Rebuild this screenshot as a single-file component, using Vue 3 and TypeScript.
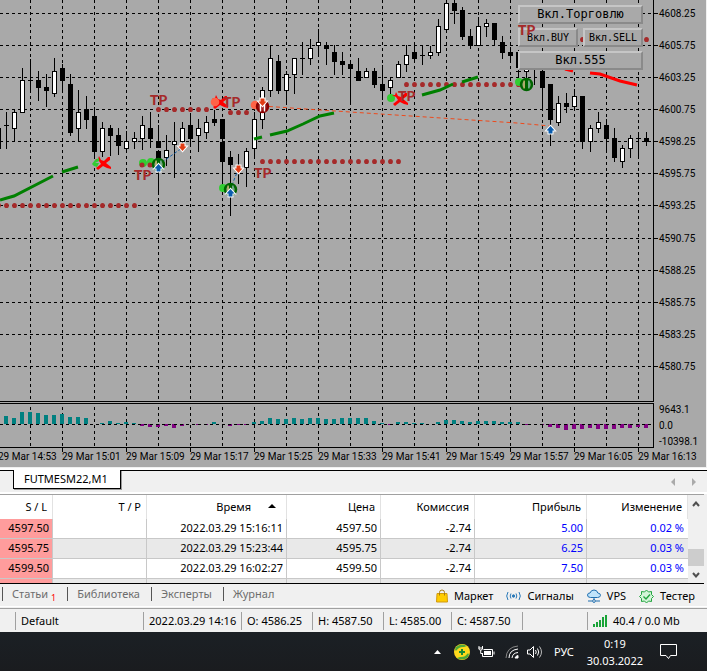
<script setup lang="ts">
type Candle = [x: number, high: number, low: number, top: number, bottom: number, kind: 'b' | 'w' | 'd']
type Point = [x: number, y: number]

const candles: Candle[] = [
  [-2, 128, 149, 128, 149, 'b'], [6, 112, 149, 125, 126, 'd'], [14, 110, 141, 112, 129, 'w'],
  [22, 68, 113, 80, 113, 'w'], [30, 59, 92, 80, 81, 'd'], [38, 71, 101, 80, 88, 'b'],
  [46, 74, 107, 87, 91, 'b'], [54, 58, 97, 71, 94, 'w'], [62, 64, 92, 68, 81, 'b'],
  [70, 74, 136, 84, 133, 'b'], [78, 90, 142, 112, 129, 'w'], [86, 96, 129, 109, 120, 'b'],
  [94, 107, 157, 116, 152, 'b'], [102, 122, 157, 128, 152, 'w'], [110, 125, 156, 128, 136, 'b'],
  [118, 128, 155, 135, 146, 'b'], [126, 131, 152, 141, 149, 'w'], [134, 132, 149, 138, 142, 'w'],
  [142, 116, 150, 125, 139, 'w'], [150, 112, 148, 128, 139, 'b'], [158, 125, 148, 141, 148, 'b'],
  [158, 151, 193, 151, 163, 'b'], [166, 135, 166, 150, 158, 'w'], [174, 122, 178, 141, 145, 'w'],
  [182, 122, 152, 128, 142, 'w'], [190, 113, 144, 125, 139, 'b'], [198, 119, 152, 128, 136, 'w'],
  [206, 116, 139, 122, 133, 'w'], [214, 110, 126, 119, 123, 'b'], [222, 119, 139, 119, 139, 'b'],
  [222, 142, 187, 142, 162, 'b'], [230, 151, 216, 157, 165, 'b'], [238, 154, 184, 165, 171, 'w'],
  [246, 148, 187, 151, 168, 'w'], [254, 112, 158, 119, 149, 'w'], [262, 87, 129, 90, 120, 'w'],
  [270, 45, 97, 58, 91, 'w'], [278, 55, 94, 61, 91, 'b'], [286, 71, 104, 74, 91, 'w'],
  [294, 58, 94, 58, 75, 'w'], [302, 42, 75, 58, 59, 'd'], [310, 39, 65, 48, 59, 'w'],
  [318, 29, 56, 42, 46, 'w'], [326, 42, 65, 45, 49, 'b'], [334, 45, 75, 52, 62, 'b'],
  [342, 52, 75, 61, 65, 'b'], [350, 60, 104, 64, 69, 'b'], [358, 58, 81, 71, 81, 'b'],
  [366, 68, 78, 71, 78, 'w'], [374, 68, 88, 71, 85, 'b'], [382, 65, 100, 84, 91, 'b'],
  [390, 77, 94, 80, 88, 'w'], [398, 61, 78, 64, 78, 'w'], [406, 45, 72, 55, 65, 'w'],
  [414, 46, 62, 52, 59, 'b'], [422, 45, 65, 55, 56, 'd'], [430, 46, 59, 52, 56, 'w'],
  [438, 19, 56, 26, 53, 'w'], [446, 0, 32, 3, 30, 'w'], [454, 0, 24, 3, 11, 'b'],
  [462, 7, 40, 10, 37, 'b'], [470, 29, 49, 36, 46, 'b'], [478, 17, 46, 26, 46, 'w'],
  [486, 19, 37, 23, 27, 'w'], [494, 23, 46, 23, 40, 'b'], [502, 36, 59, 42, 53, 'b'],
  [510, 47, 60, 52, 56, 'b'], [518, 50, 78, 52, 68, 'b'], [518, 68, 78, 71, 72, 'd'],
  [526, 60, 78, 66, 72, 'w'], [534, 60, 85, 60, 68, 'b'], [542, 66, 108, 71, 88, 'b'],
  [550, 84, 146, 84, 120, 'b'], [558, 96, 126, 103, 123, 'w'], [566, 93, 113, 103, 107, 'b'],
  [574, 89, 110, 96, 107, 'w'], [582, 96, 149, 96, 142, 'b'], [590, 125, 152, 128, 142, 'w'],
  [598, 112, 133, 122, 129, 'w'], [606, 119, 152, 125, 139, 'b'], [614, 128, 162, 138, 158, 'b'],
  [622, 145, 168, 148, 162, 'w'], [630, 135, 158, 138, 149, 'w'], [638, 135, 157, 138, 139, 'd'],
  [646, 132, 146, 138, 142, 'b'],
]

// Histogram values, one per bar from x = 6, in steps of 8
const volume: number[] = [
  8, 6, 12, 12, 11, 9, 9, 10, 7, 7, 6, 0, 1, 3, 1, 2, 1, -2, -3, -3, -2, -4, -2, 0, -1, -1, 2, 0, -2, -1, -1,
  2, 3, 6, 5, 5, 6, 5, 6, 6, 5, 5, 6, 6, 6, 6, 3, 1, -1, 2, 2, 1, 1, 0, 2, 4, 4, 3, 2, 3, 3, 3, 2, 2, 2, -1, 0, -1,
  -3, -4, -6, -5, -5, -4, -5, -5, -5, -4, -4, -3, -4,
]

const gridX = Array.from({ length: 20 }, (_, i) => 30 + i * 32)
const gridY = Array.from({ length: 12 }, (_, i) => 13 + Math.round(i * 32.08))

function row(from: number, to: number, y: number): Point[] {
  const out: Point[] = []
  for (let x = from; x <= to; x += 8) out.push([x, y])
  return out
}
const dots: Point[] = [
  ...row(-2, 134, 205), ...row(158, 206, 109), ...row(230, 246, 112),
  ...row(262, 398, 161), ...row(406, 518, 84), ...row(582, 646, 39), [142, 164], [150, 164],
]
const targets: Point[] = [[150, 105], [134, 180], [223, 107], [254, 178], [398, 101]]
const blobsGreen: Point[] = [[143, 163], [151, 162], [223, 188], [391, 98], [519, 82]]
const blobsRed: Point[] = [[215, 102], [255, 105]]
const rings: Point[] = [[158, 164], [230, 189], [526, 84]]
const crosses: Point[] = [[103, 163], [220, 102], [400, 99]]
const buys: Point[] = [[158, 168], [230, 193], [550, 130]]
const sells: Point[] = [[182, 147], [238, 169], [262, 102]]

const prices = ['4608.25', '4605.75', '4603.25', '4600.75', '4598.25', '4595.75', '4593.25', '4590.75', '4588.25', '4585.75', '4583.25', '4580.75']
const times = ['14:53', '15:01', '15:09', '15:17', '15:25', '15:33', '15:41', '15:49', '15:57', '16:05', '16:13']

interface Deal { sl: string; time: string; price: string; fee: string; profit: string; change: string }
const deals: Deal[] = [
  { sl: '4597.50', time: '2022.03.29 15:16:11', price: '4597.50', fee: '-2.74', profit: '5.00', change: '0.02 %' },
  { sl: '4595.75', time: '2022.03.29 15:23:44', price: '4595.75', fee: '-2.74', profit: '6.25', change: '0.03 %' },
  { sl: '4599.50', time: '2022.03.29 16:02:27', price: '4599.50', fee: '-2.74', profit: '7.50', change: '0.03 %' },
]
</script>

<template>
  <div class="terminal">
    <main class="chart">
      <div class="plot-column">
        <svg class="plot" viewBox="0 0 654 448" preserveAspectRatio="xMaxYMin slice" shape-rendering="crispEdges" role="img" aria-label="FUTMESM22,M1">
          <g class="grid">
            <line v-for="x in gridX" :key="'v' + x" :x1="x + 0.5" y1="0" :x2="x + 0.5" y2="400" />
            <line v-for="x in gridX" :key="'w' + x" :x1="x + 0.5" y1="407" :x2="x + 0.5" y2="447" />
            <line v-for="y in gridY" :key="'h' + y" x1="0" :y1="y + 0.5" x2="653" :y2="y + 0.5" />
          </g>
          <g v-for="(c, i) in candles" :key="i">
            <rect :x="c[0]" :y="c[1]" width="1" :height="c[2] - c[1]" fill="#000" />
            <rect v-if="c[5] !== 'w'" :x="c[0] - 2" :y="c[3]" width="5" :height="c[4] - c[3]" fill="#000" />
            <template v-else>
              <rect :x="c[0] - 2" :y="c[3]" width="5" :height="c[4] - c[3]" fill="#000" />
              <rect :x="c[0] - 1" :y="c[3] + 1" width="3" :height="c[4] - c[3] - 2" fill="#fff" />
            </template>
          </g>
          <g shape-rendering="geometricPrecision">
            <ellipse v-for="(d, i) in dots" :key="i" :cx="d[0] + 0.5" :cy="d[1] + 0.5" rx="2.4" ry="2.6" fill="#a52a2a" />
            <g class="trend">
              <path d="M0 200 L7 198 L14 196 L53 176M62 172 L78 167M254 139 L262 137M270 135 L287 131L303 124 L320 116 L334 113M422 95 L440 90 L453 84M462 82 L478 77" />
              <path class="falling" d="M565 69 L573 71M590 73 L600 74 L620 81 L637 85" />
            </g>
            <path class="trade-line sell" d="M262 106 L350 112 L517 123 L550 126" />
            <path class="trade-line buy" d="M158 165 L182 148M230 190 L238 170" />
            <circle v-for="(b, i) in blobsGreen" :key="'g' + i" :cx="b[0]" :cy="b[1]" r="4" fill="#32cd32" />
            <circle v-for="(b, i) in dots.slice(-2)" :key="'c' + i" :cx="b[0]" :cy="b[1] + 1" r="2.5" fill="#a52a2a" />
            <g v-for="(p, i) in crosses" :key="'x' + i" :transform="`translate(${p[0]} ${p[1]})`">
              <path d="M-8 -4 L-5 -4 L-4 -7 L-2 -3 L1 -2 L5 -6 L7 -6 L7 -3 L3 0 L8 4 L8 6 L4 5 L0 3 L-5 7 L-7 5 L-2 1 L-4 -2 Z" fill="#f00" />
              <path v-if="i === 0" d="M-11 1 L-8 -3 L-4 -5 L-4 -2 L-8 0 L-4 0 L-6 4 L-9 3 Z" fill="#32cd32" />
            </g>
            <circle v-for="(b, i) in blobsRed" :key="'r' + i" :cx="b[0]" :cy="b[1]" r="4.3" fill="#ff6347" />
            <g v-for="(p, i) in rings" :key="'o' + i" :transform="`translate(${p[0] + 0.5} ${p[1] + 0.5})`">
              <circle r="5.5" class="ring" />
              <path d="M-2.5 -4V4" stroke="#e8c070" />
              <path d="M2.500 -4V4" stroke="#6fb8a8" />
              <path d="M0 -5V5" stroke="#006400" stroke-width="3" />
            </g>
            <g transform="translate(262.5 106.5)">
              <circle r="5.5" class="ring ring-sell" />
              <path d="M-2 -4V5M2 -4V5" stroke="#fff" stroke-width="1.4" />
            </g>
            <path v-for="(p, i) in buys" :key="'b' + i" class="arrow buy-arrow" :transform="`translate(${p[0] + 0.5} ${p[1]})`" d="M0 -4 L4 0.5 H2 V3.5 H-2 V0.5 H-4Z" />
            <path v-for="(p, i) in sells" :key="'s' + i" class="arrow sell-arrow" :transform="`translate(${p[0] + 0.5} ${p[1]})`" d="M0 4 L4 -0.5 H2 V-3.5 H-2 V-0.5 H-4Z" />
            <text v-for="(t, i) in targets" :key="'t' + i" class="target" :x="t[0]" :y="t[1]">TP</text>
          </g>
          <g>
            <template v-for="(v, i) in volume" :key="i">
              <rect v-if="v" :x="4 + i * 8" :y="v > 0 ? 424 - v : 424" width="4" :height="Math.abs(v)" :fill="v > 0 ? '#008080' : '#800080'" />
            </template>
            <line class="zero" x1="0" y1="424.5" x2="653" y2="424.5" />
            <path d="M0 401.5H653.5V0M0 403.5H653.5V447.5H0" fill="none" stroke="#000" />
          </g>
        </svg>
      </div>
      <div class="axis">
        <ol class="prices">
          <li v-for="p in prices" :key="p">{{ p }}</li>
        </ol>
        <ul class="levels">
          <li>9643.1</li><li>0.0</li><li>-10398.1</li>
        </ul>
      </div>
      <ol class="times">
        <li v-for="t in times" :key="t">29 Mar {{ t }}</li>
      </ol>
      <div class="trade-panel">
        <button type="button" class="wide">Вкл.Торговлю</button>
        <button type="button">Вкл.BUY</button>
        <button type="button">Вкл.SELL</button>
        <button type="button" class="wide">Вкл.555</button>
        <span class="panel-target">TP</span>
      </div>
    </main>

    <nav class="chart-tabs">
      <button type="button" class="chart-tab">FUTMESM22,M1</button>
      <span class="pager">
        <button type="button" aria-label="←"><svg width="4" height="8" viewBox="0 0 4 8"><path d="M4 0V8L0 4Z" fill="#aaa" /></svg></button>
        <button type="button" aria-label="→"><svg width="4" height="8" viewBox="0 0 4 8"><path d="M0 0V8L4 4Z" fill="#aaa" /></svg></button>
      </span>
    </nav>

    <section class="history">
      <div class="table-wrap">
        <table>
          <colgroup>
            <col class="c-sl"><col class="c-tp"><col class="c-time"><col class="c-price"><col class="c-fee"><col class="c-profit"><col class="c-change">
          </colgroup>
          <thead>
            <tr>
              <th>S / L</th><th>T / P</th>
              <th class="sorted">Время<svg width="8" height="4" viewBox="0 0 8 4"><path d="M0 4L4 0L8 4Z" /></svg></th>
              <th>Цена</th><th>Комиссия</th><th>Прибыль</th><th>Изменение</th>
            </tr>
          </thead>
          <tbody>
            <tr v-for="d in deals" :key="d.time">
              <td class="sl">{{ d.sl }}</td><td></td><td>{{ d.time }}</td><td>{{ d.price }}</td><td>{{ d.fee }}</td>
              <td class="gain">{{ d.profit }}</td><td class="gain">{{ d.change }}</td>
            </tr>
            <tr class="cut"><td class="sl"></td><td></td><td></td><td></td><td></td><td></td><td></td></tr>
          </tbody>
        </table>
      </div>
      <div class="scroller">
        <button type="button" aria-label="↑"><svg width="8" height="6" viewBox="0 0 8 6"><path d="M1 5L4 1.5L7 5" /></svg></button>
        <div class="track"><div class="thumb"></div></div>
        <button type="button" aria-label="↓"><svg width="8" height="6" viewBox="0 0 8 6"><path d="M1 1L4 4.5L7 1" /></svg></button>
      </div>
    </section>

    <nav class="toolbox">
      <button type="button" class="tab">Статьи<sub>1</sub></button>
      <button type="button" class="tab">Библиотека</button>
      <button type="button" class="tab">Эксперты</button>
      <button type="button" class="tab">Журнал</button>
      <span class="services">
        <a href="#market"><svg width="12" height="14" viewBox="0 0 12 14"><path d="M1 4.500H11L11.500 13H0.500Z" fill="#ffcc00" stroke="#d09a10" /><path d="M3.500 6.500V3.500a2.500 2.500 0 0 1 5 0V6.500" fill="none" stroke="#a87b10" /></svg>Маркет</a>
        <a href="#signals"><svg width="15" height="12" viewBox="0 0 15 12" fill="none" stroke="#2878b8"><circle cx="7.5" cy="6" r="1.2" fill="#2878b8" /><path d="M5 3.5Q3.4 6 5 8.500M10 3.500Q11.600 6 10 8.500M2 2Q-.6 6 2 10M13 2Q15.600 6 13 10" /></svg>Сигналы</a>
        <a href="#vps"><svg width="14" height="14" viewBox="0 0 14 14" fill="none" stroke="#1f6fb0"><path d="M3.500 8.500Q.5 8.500.5 6Q.8 3.800 3 4Q4 1 7 1Q10.200 1 10.800 4Q13.500 4.200 13.500 6.300Q13.300 8.500 10.500 8.500Z" fill="#bfe3fa" /><path d="M7 8.500V11M1 12H5M9 12H13" /><circle cx="7" cy="12" r="1.400" /></svg>VPS</a>
        <a href="#tester"><svg width="15" height="15" viewBox="0 0 15 15" fill="none" stroke="#22a53f"><path d="M7.500 1L9.500 3L12.500 2.500L12.500 5.500L14.500 7.500L12.500 9.500L12.500 12.500L9.500 12L7.500 14L5.500 12L2.500 12.500L2.500 9.500L.5 7.500L2.500 5.500L2.500 2.500L5.500 3Z" fill="#d3f5d8" /><path d="M4.500 7.500L7 10L11 5.500" stroke-width="1.400" /></svg>Тестер</a>
      </span>
    </nav>

    <footer class="status">
      <span class="profile">Default</span>
      <span class="moment">2022.03.29 14:16</span>
      <span class="ohlc">O: 4586.25</span>
      <span class="ohlc">H: 4587.50</span>
      <span class="low">L: 4585.00</span>
      <span class="ohlc">C: 4587.50</span>
      <span class="blank"></span>
      <span class="traffic"><svg width="14" height="12" viewBox="0 0 14 12"><path d="M0 9H2V12H0ZM3 7H5V12H3ZM6 5H8V12H6ZM9 2H11V12H9ZM12 0H14V12H12Z" fill="#18a337" /></svg>40.4 / 0.0 Mb</span>
    </footer>

    <div class="taskbar">
      <button type="button" class="t-more" aria-label="▲"><svg width="7" height="4" viewBox="0 0 7 4"><path d="M0 4L3.500 0L7 4Z" fill="#fff" /></svg></button>
      <svg class="t-guard" width="16" height="16" viewBox="0 0 16 16"><circle cx="8" cy="8" r="8" fill="#ffd91c" /><path d="M2 3Q7 -1.500 13 2L10 3Q5 2.500 2.500 6.500Q0 7 2 3ZM14 13Q9 17.500 3 14L6 13Q11 13.500 13.500 9.500Q16 9 14 13Z" fill="#4fa83a" /><path d="M8 5V11M5 8H11" stroke="#1b8a34" stroke-width="2" /></svg>
      <svg class="t-battery" width="17" height="14" viewBox="0 0 17 14" fill="none" stroke="#fff"><path d="M1 1V4Q1 5 2.500 5Q4.500 5 4.500 4V1M.5 3H5M2.700 5V8.500H5" /><path d="M5.500 4.500H14.500V11.500H4.500V8.500" /><rect x="6.500" y="6.500" width="6" height="3" fill="#fff" /><path d="M16 6.500V9.500" /></svg>
      <svg class="t-wifi" width="14" height="14" viewBox="0 0 14 14" fill="none" stroke="#fff"><path d="M1 13Q1.500 2 13 1" stroke="#888" /><path d="M4 13Q4 5 13 4M7 13Q7.500 8 13 7.500" /><path d="M10 13Q10.500 11 13 10.500V13Z" fill="#fff" /></svg>
      <svg class="t-sound" width="17" height="14" viewBox="0 0 17 14" fill="none" stroke="#fff"><path d="M.5 5H3L6.500 1.500V12.500L3 9H.5Z" /><path d="M8.500 5Q10 7 8.500 9M10.500 3.500Q13 7 10.500 10.500" /><path d="M12.500 1.500Q16.500 7 12.500 12.500" stroke="#bbb" /></svg>
      <button type="button" class="t-lang">РУС</button>
      <div class="clock"><time>0:19</time><span>30.03.2022</span></div>
      <button type="button" class="t-notes" aria-label="…"><svg width="17" height="17" viewBox="0 0 17 17" fill="none" stroke="#fff"><path d="M.5 1.500H16.500V12.500H10.500L8.500 15.500L6 12.500H.5Z" /></svg></button>
    </div>
  </div>
</template>

<style>
body { margin: 0; background: #f0f0f0; }
</style>

<style scoped>
.terminal {
  font-family: "Noto Sans", "Open Sans", sans-serif;
  font-size: 11px;
  line-height: 16px;
  color: #000;
  background: #f0f0f0;
  overflow: hidden;
}
button { border: 0; margin: 0; padding: 0; background: none; font: inherit; color: inherit; }
ol, ul { list-style: none; margin: 0; padding: 0; }
a { color: inherit; text-decoration: none; }
svg { display: block; flex: none; }

.chart {
  position: relative;
  display: grid;
  grid-template-columns: minmax(0, 1fr) 52px;
  margin-right: 1px;
  background: #a9a9a9;
  font-family: Roboto, sans-serif;
  font-size: 10px;
}
.plot { width: 100%; height: 448px; }
.grid line, .zero { stroke: #000; stroke-dasharray: 3 3; }
.trend path { fill: none; stroke: #008000; stroke-width: 3; }
.trend .falling { stroke: #f00; }
.trade-line { fill: none; }
.trade-line.sell { stroke: #ee4a1c; stroke-dasharray: 4 3; }
.trade-line.buy { stroke: #1560a8; stroke-dasharray: 3 2; }
.ring { fill: #75986a; stroke: #006400; stroke-width: 2.5; }
.ring-sell { fill: #a02020; stroke: #8b0000; }
.arrow { stroke: #fff; stroke-width: 2; paint-order: stroke; }
.buy-arrow { fill: #0a5cad; }
.sell-arrow { fill: #e03c14; }
.target, .panel-target {
  font-family: Lato, "Open Sans", sans-serif;
  font-size: 14px;
  font-weight: 900;
  fill: #a52a2a;
}
.axis { display: flex; flex-direction: column; justify-content: space-between; padding-top: 6px; }
.prices li, .levels li { position: relative; padding-left: 5px; white-space: nowrap; }
.prices { display: flex; flex-direction: column; justify-content: space-between; height: 385px; }
.prices li { height: 32px; }
.prices li::before { content: ""; position: absolute; left: 0; top: 7px; width: 4px; height: 1px; background: #000; }
.levels { display: flex; flex-direction: column; margin-bottom: -2px; }
.times { grid-column: 1 / -1; display: flex; margin-left: -2px; height: 19px; }
.times li { flex: none; width: 64px; line-height: 18px; white-space: nowrap; background: linear-gradient(#000, #000) 0 0 / 1px 4px no-repeat; }

.trade-panel {
  position: absolute;
  top: 5px;
  right: 63px;
  width: 125px;
  display: grid;
  grid-template-columns: 1fr 1fr;
  gap: 4px 5px;
}
.trade-panel button {
  height: 19px;
  border: 2px solid;
  border-color: #c6c6c6 #8a8a8a #8a8a8a #c6c6c6;
  background: #a9a9a9;
  font: 10px/15px "DejaVu Sans Mono", monospace;
}
.trade-panel .wide { grid-column: 1 / -1; font-size: 12px; }
.panel-target { position: absolute; left: 0; top: 17px; color: #a52a2a; line-height: 16px; }

.chart-tabs {
  display: flex;
  justify-content: space-between;
  height: 21px;
  margin-top: 3px;
  border-top: 1px solid #000;
  border-bottom: 2px solid #fff;
  box-shadow: 0 -2px #fff;
}
.chart-tab {
  height: 19px;
  margin: -1px 0 0 13px;
  padding: 0 12px 0 10px;
  border: 1px solid #000;
  border-top: 0;
  background: #fff;
  box-shadow: 1px 1px #999;
}
.pager { display: flex; align-items: center; gap: 17px; padding-right: 11px; }

.history { display: flex; height: 88px; border-top: 1px solid #a0a0a0; border-bottom: 1px solid #000; margin-right: 3px; }
.table-wrap { flex: 1; min-width: 0; overflow: hidden; background: #fff; }
table { width: 100%; table-layout: fixed; border-collapse: separate; border-spacing: 0; }
.c-sl { width: 53px; }
.c-time { width: 140px; }
.c-tp, .c-price, .c-fee { width: 94px; }
.c-profit { width: 112px; }
th, td { padding: 0 3px 0 0; text-align: right; font-weight: 400; white-space: nowrap; border-right: 1px solid #c8c8c8; box-sizing: border-box; }
th { height: 24px; padding-right: 5px; border-color: #e2e2e2; }
td { height: 20px; padding-bottom: 2px; border-bottom: 1px solid #c8c8c8; }
td:last-child { border-right: 0; padding-right: 4px; }
tbody tr:nth-child(even) td { background: #e9e9e9; }
tbody tr td.sl { background: #ff9c9c; }
.sorted svg { display: inline-block; vertical-align: 3px; margin: 0 5px 0 17px; }
.gain { color: #00f; }
.scroller { width: 16px; display: flex; flex-direction: column; background: #f0f0f0; }
.scroller button { height: 17px; display: flex; justify-content: center; align-items: center; }
.scroller path { fill: none; stroke: #505050; stroke-width: 2; }
.track { flex: 1; display: flex; flex-direction: column; justify-content: flex-end; }
.thumb { height: 17px; background: #cdcdcd; }

.toolbox { display: flex; height: 22px; border-bottom: 1px solid #fff; }
.tab { display: flex; align-items: center; height: 14px; margin: 3px 0 0 2px; padding: 0 9px; border-left: 1px solid #555; color: #6d6d6d; line-height: 14px; }
.tab sub { margin: 7px 0 0 3px; font-size: 9px; line-height: 9px; color: #f00; }
.services { flex: 1; display: flex; justify-content: flex-end; align-items: center; gap: 13px; padding: 2px 12px 0 0; }
.services a { display: flex; align-items: center; gap: 6px; }

.status { display: flex; align-items: center; height: 23px; margin-top: 1px; padding-left: 15px; border-top: 1px solid #a0a0a0; }
.status span { box-sizing: border-box; height: 18px; padding-left: 5px; border-left: 1px solid #a0a0a0; line-height: 18px; white-space: nowrap; }
.profile { width: 128px; }
.moment { width: 98px; }
.ohlc { width: 71px; }
.low { width: 68px; }
.blank { flex: 1; }
.traffic { width: 120px; display: flex; align-items: center; gap: 6px; }

.taskbar {
  display: flex;
  justify-content: flex-end;
  align-items: center;
  height: 39px;
  padding-right: 30px;
  background: linear-gradient(#1b2025, #1a1c1f);
  color: #fff;
}
.t-guard { margin-left: 13px; }
.t-battery { margin-left: 8px; }
.t-wifi { margin-left: 10px; }
.t-sound { margin-left: 8px; }
.t-lang { margin-left: 10px; }
.clock { display: flex; flex-direction: column; align-items: center; margin: 0 17px 0 13px; line-height: 17px; }
</style>
